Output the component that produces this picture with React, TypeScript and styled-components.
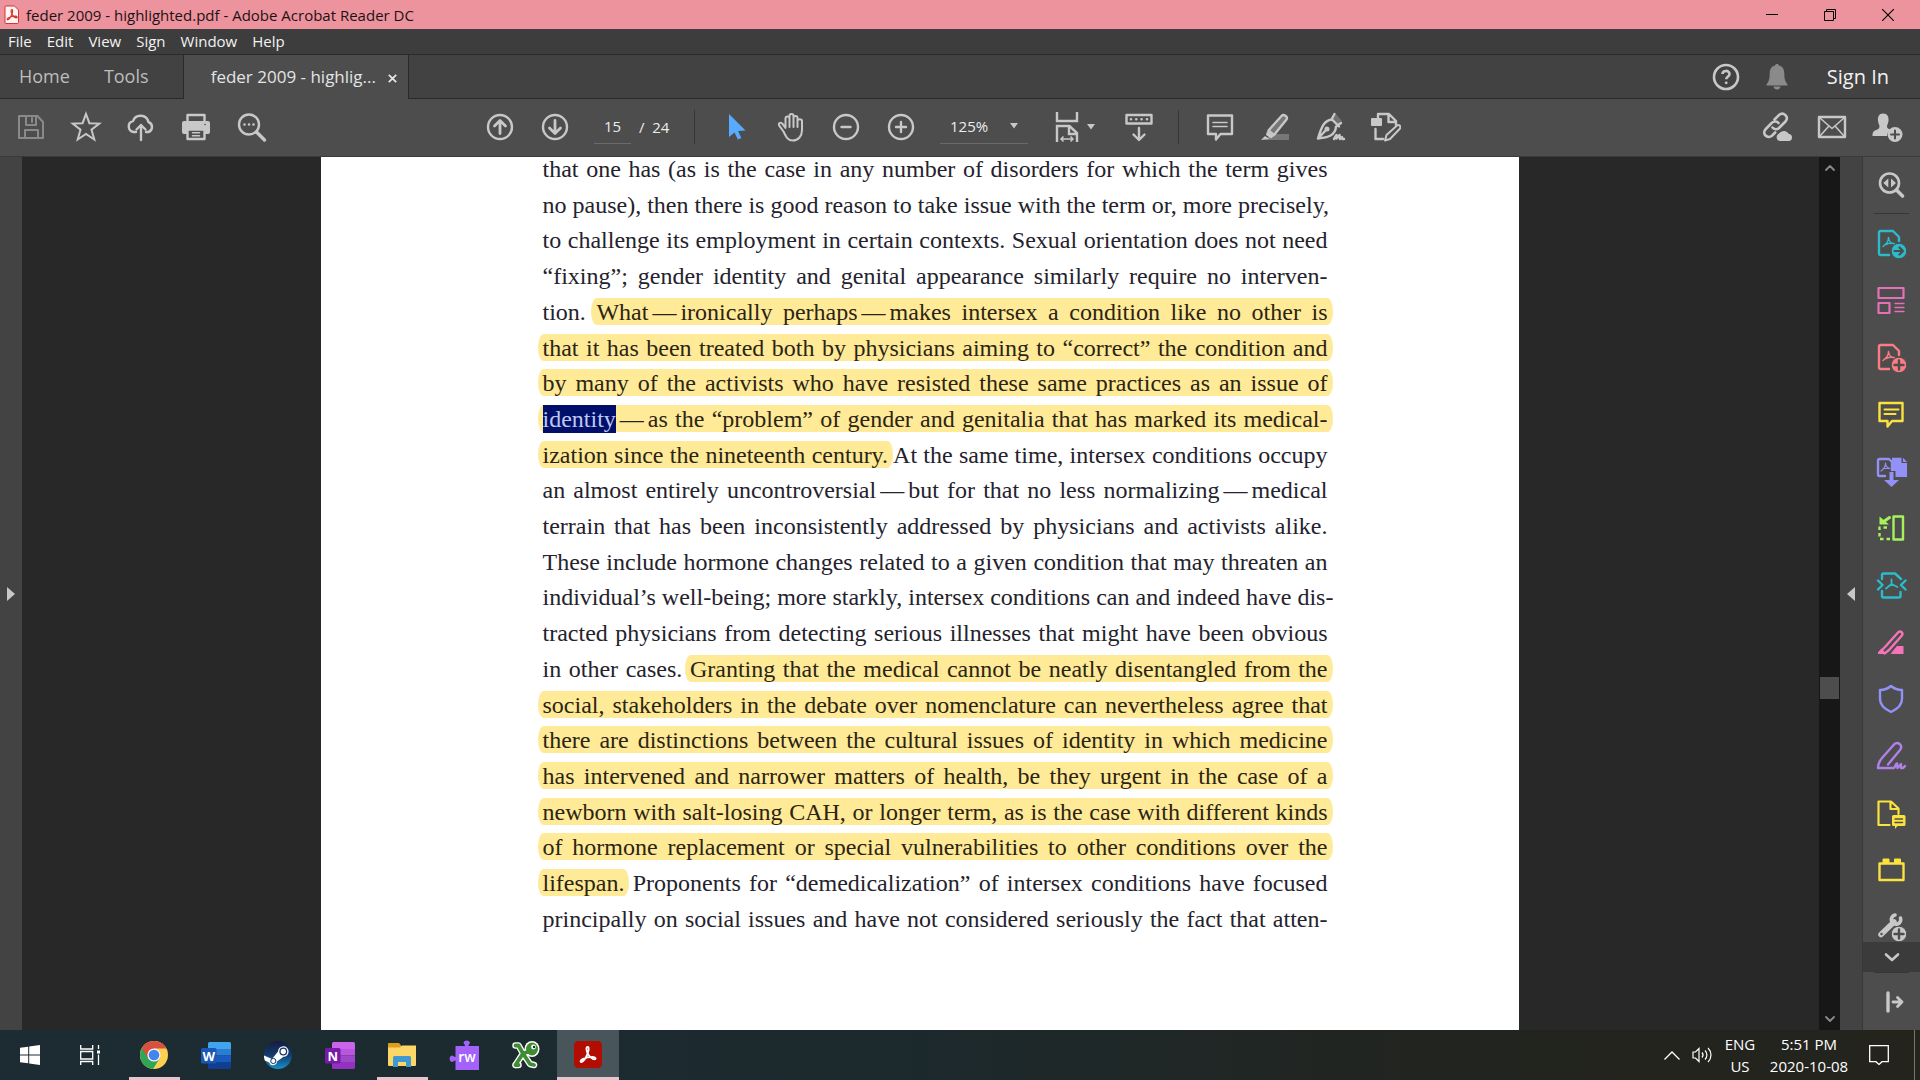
import React from "react";
import styled, { createGlobalStyle } from "styled-components";

const UI = `"Open Sans", "Noto Sans", "Liberation Sans", sans-serif`;
const BOOK = `"Liberation Serif", "DejaVu Serif", serif`;

const GlobalStyle = createGlobalStyle`
  * { box-sizing: border-box; }
  html, body { margin: 0; padding: 0; background: #282828; }
  body { font-family: ${UI}; overflow: hidden; }
  button { border: 0; padding: 0; background: none; color: inherit; font: inherit; }
`;

const Screen = styled.div`
  display: flex;
  flex-direction: column;
  height: 100vh;
  color: #e6e6e6;
`;

/* ---------- window chrome ---------- */

const TitleBar = styled.header`
  display: flex;
  align-items: center;
  flex: none;
  height: 29px;
  padding: 0 3px 0 4px;
  gap: 6px;
  background: #ed939d;
  color: #1c1214;
`;

const WindowTitle = styled.h1`
  flex: 1;
  margin: 0;
  font-size: 15px;
  font-weight: 400;
  white-space: nowrap;
`;

const CaptionButtons = styled.div`
  display: flex;
`;

const CaptionButton = styled.button`
  display: grid;
  place-items: center;
  width: 58px;
  height: 29px;
  color: #000;
`;

const MenuBar = styled.nav`
  display: flex;
  align-items: center;
  flex: none;
  height: 26px;
  padding: 0 8px 1px;
  gap: 15px;
  background: #3d3d3d;
  border-bottom: 1px solid #2a2a2a;
  color: #f2f2f2;
  font-size: 15px;
  line-height: 22px;
`;

const TabBar = styled.div`
  display: flex;
  align-items: stretch;
  flex: none;
  height: 44px;
  background: #424242;
  box-shadow: inset 0 -1px #2a2a2a;
`;

const MainTabs = styled.div`
  display: flex;
  align-items: center;
  gap: 34px;
  width: 183px;
  padding: 0 0 2px 19px;
  color: #bdbdbd;
  font-size: 18px;
`;

const DocumentTab = styled.div`
  display: flex;
  align-items: center;
  justify-content: flex-end;
  gap: 12px;
  width: 226px;
  padding: 0 11px 2px 0;
  background: #4d4d4d;
  border: solid #2a2a2a;
  border-width: 0 1px;
  color: #e4e4e4;
  font-size: 17px;
  white-space: nowrap;
`;

const AccountArea = styled.div`
  display: flex;
  align-items: center;
  gap: 19px;
  margin-left: auto;
  padding: 0 31px 1px 0;
`;

const SignIn = styled.button`
  margin-left: 15px;
  color: #f2f2f2;
  font-size: 20px;
  font-weight: 500;
`;

const IconButton = styled.button<{ $w?: number; $gap?: number; $dim?: boolean }>`
  display: flex;
  align-items: center;
  justify-content: center;
  flex: none;
  gap: ${(p) => p.$gap ?? 0}px;
  width: ${(p) => p.$w ?? 55}px;
  height: 32px;
  color: ${(p) => (p.$dim ? "#8a8a8a" : "#c8c8c8")};
`;

/* ---------- toolbar ---------- */

const Toolbar = styled.div`
  display: flex;
  align-items: center;
  flex: none;
  height: 58px;
  padding: 0 6px 2px 3px;
  background: #4d4d4d;
  border-bottom: 1px solid #3a3a3a;
`;

const ToolGroup = styled.div<{ $indent?: string }>`
  display: flex;
  align-items: center;
  margin-left: ${(p) => p.$indent ?? "0"};
`;

const Divider = styled.span`
  width: 1px;
  height: 34px;
  margin: 0 13px 0 12px;
  background: #363636;
`;

const PageField = styled.label`
  display: flex;
  align-items: center;
  gap: 8px;
  width: 88px;
  margin-left: 12px;
  color: #ececec;
  font-size: 15px;
  white-space: pre;
`;

const PageInput = styled.input`
  width: 37px;
  height: 35px;
  padding: 0;
  border: 0;
  border-bottom: 1px solid #6a6a6a;
  background: none;
  color: #ececec;
  font: 15px ${UI};
  text-align: center;
`;

const ZoomField = styled.label`
  display: grid;
  align-items: center;
  grid-template-columns: 1fr 18px;
  width: 88px;
  height: 35px;
  margin: 0 11px 0 12px;
  border-bottom: 1px solid #6a6a6a;
  color: #c8c8c8;
`;

const ZoomSelect = styled.select`
  appearance: none;
  width: 100%;
  padding: 0 0 0 10px;
  border: 0;
  background: none;
  color: #ececec;
  font: 15px ${UI};
`;

/* ---------- workspace ---------- */

const Workspace = styled.div`
  display: flex;
  flex: 1;
  min-height: 0;
`;

const PaneToggle = styled.button<{ $edge?: boolean }>`
  display: grid;
  place-items: center;
  flex: none;
  width: ${(p) => (p.$edge ? "23" : "22")}px;
  background: #434343;
  border-right: ${(p) => (p.$edge ? "1px solid #383838" : "0")};
  color: #c8c8c8;
`;

const Viewport = styled.main`
  display: flex;
  justify-content: center;
  flex: 1;
  min-width: 0;
  padding-right: 2px;
  overflow: hidden;
  background: #282828;
`;

const Page = styled.article`
  display: flex;
  width: 1198px;
  padding: 0 191px 99px 222px;
  background: #fff;
`;

const TextColumn = styled.div`
  display: flex;
  flex-direction: column;
  justify-content: space-between;
  flex: 1;
  min-width: 0;
  color: #24222c;
  font-family: ${BOOK};
  font-size: 24px;
  line-height: 24px;
`;

const Line = styled.p`
  margin: 0;
  text-align: justify;
  text-align-last: justify;
  white-space: nowrap;
`;

const Highlight = styled.mark`
  margin: 0 -5px;
  padding: 1px 5px 0;
  border-radius: 6px / 14px;
  background: #ffea98;
  color: #2c2412;
`;

const Selected = styled.span`
  padding: 1px 0;
  background: #00106a;
  color: #bfc8f2;
`;

const Dash = styled.span`
  margin: 0 4px;
`;

const ScrollBar = styled.div`
  display: flex;
  flex-direction: column;
  align-items: center;
  flex: none;
  width: 21px;
  background: #171717;
  color: #8a8a8a;
`;

const ScrollButton = styled.button`
  display: grid;
  place-items: center;
  width: 21px;
  height: 22px;
`;

const ScrollTrack = styled.div`
  display: flex;
  flex-direction: column;
  flex: 1;
  width: 19px;
`;

const ScrollSpace = styled.span<{ $grow: number }>`
  flex: ${(p) => p.$grow} 0 0;
`;

const ScrollThumb = styled.span`
  height: 22px;
  background: #4d4d4d;
`;

const ToolRail = styled.aside`
  display: flex;
  flex-direction: column;
  flex: none;
  width: 57px;
  background: #4d4d4d;
  color: #c8c8c8;
`;

const RailItem = styled.button<{ $tint?: string; $h?: number }>`
  display: grid;
  place-items: center;
  flex: none;
  width: 56px;
  height: ${(p) => p.$h ?? 57}px;
  color: ${(p) => p.$tint ?? "#c8c8c8"};
`;

const RailRule = styled.hr`
  flex: none;
  width: 35px;
  height: 1px;
  margin: 0 11px;
  border: 0;
  background: #363636;
`;

const RailList = styled.div`
  display: flex;
  flex-direction: column;
  flex: 1;
  min-height: 0;
  overflow: hidden;
`;

const RailMore = styled.button`
  display: grid;
  place-items: center;
  flex: none;
  height: 30px;
  background: #3b3b3b;
`;

/* ---------- task bar ---------- */

const TaskBar = styled.footer`
  display: flex;
  align-items: stretch;
  flex: none;
  height: 50px;
  background: linear-gradient(90deg, #1c2c32 0%, #1c2a2e 45%, #22241f 75%, #24241d 100%);
  color: #fff;
`;

const TaskButton = styled.button<{ $open?: boolean; $active?: boolean }>`
  display: grid;
  place-items: center;
  width: 62px;
  background: ${(p) =>
    p.$active
      ? "linear-gradient(#eac4cd, #eac4cd) bottom / 100% 3px no-repeat #48565b"
      : p.$open
        ? "linear-gradient(#eac4cd, #eac4cd) bottom / 51px 3px no-repeat"
        : "none"};
`;

const ShellButtons = styled.div`
  display: grid;
  grid-template-columns: 60px 60px;
  width: 123px;
`;

const ShellButton = styled.button`
  display: grid;
  place-items: center;
`;

const Tray = styled.div`
  display: flex;
  align-items: center;
  margin-left: auto;
  color: #fff;
  font-size: 15px;
  line-height: 22px;
  text-align: center;
`;

const TrayButton = styled.button<{ $w: number }>`
  display: grid;
  place-items: center;
  width: ${(p) => p.$w}px;
  height: 50px;
  line-height: 22px;
`;

const ShowDesktop = styled.button`
  width: 6px;
  height: 50px;
  margin-left: 12px;
  border-left: 1px solid #777770;
`;

/* ---------- drawings ---------- */

type SvgProps = { size?: number; sw?: number; children: React.ReactNode };

const Glyph = ({ size = 32, sw = 2.4, children }: SvgProps) => (
  <svg
    width={size}
    height={size}
    viewBox={`0 0 ${size} ${size}`}
    fill="none"
    stroke="currentColor"
    strokeWidth={sw}
    strokeLinecap="round"
    strokeLinejoin="round"
    aria-hidden="true"
  >
    {children}
  </svg>
);

const Fill = ({ d, color = "currentColor" }: { d: string; color?: string }) => (
  <path d={d} fill={color} stroke="none" />
);

const AcrobatMark = ({ scale = 1, x = 0, y = 0, sw = 1.6 }: { scale?: number; x?: number; y?: number; sw?: number }) => (
  <path
    transform={`translate(${x} ${y}) scale(${scale})`}
    strokeWidth={sw}
    d="M6.8 .8C5.2.8 5.6 4 7 6.6c1.200 2.300 3.800 4.500 5.400 4.500 1.700-.1 1.200-2-1.500-2.100-3 0-6 .7-8.300 1.900-2.200 1.200-2 2.700-1 2.500C3.400 13 5.600 9.400 6.800 6.200 7.900 3.400 8 .8 6.800.8Z"
  />
);

const PdfSheet = () => (
  <>
    <path d="M14 28H5.500A1.500 1.500 0 0 1 4 26.500V5.500A1.500 1.500 0 0 1 5.500 4H18l6 6v4" />
    <path d="M13.500 10.500c-.3 4-1 5.500-5.500 9M13.500 10.500c.6 4 1.500 5.500 6 6.500M11 17.500c2-1 5-1.500 8-1" strokeWidth="1.400" />
  </>
);

const Icons = {
  save: (
    <Glyph sw={2}>
      <path d="M4 5h18.500L28 11v16H4Z" />
      <path d="M11 5v9h10V5M10 27v-8h13v8M17 7v4" />
    </Glyph>
  ),
  star: (
    <Glyph sw={2}>
      <path d="m16 3 3.400 9.200 10 .4-7.900 6.100 2.800 9.800L16 23l-8.300 5.500 2.800-9.800-7.900-6.100 10-.4Z" strokeLinejoin="miter" />
    </Glyph>
  ),
  cloud: (
    <Glyph>
      <path d="M11 21H8.500A5.500 5.500 0 0 1 8 10.200 8 8 0 0 1 23.400 11 5.300 5.300 0 0 1 23.500 21H21M16 29V14M11.500 18.500 16 14l4.500 4.500" />
    </Glyph>
  ),
  print: (
    <Glyph>
      <path d="M7.500 10.500V4h17v6.500" />
      <Fill d="M4 10h24a2 2 0 0 1 2 2v9a2 2 0 0 1-2 2H4a2 2 0 0 1-2-2v-9a2 2 0 0 1 2-2Z" />
      <path d="M7.500 18.500h17V28h-17Z" fill="#4d4d4d" />
      <path d="M12.500 21.700h7M12.500 24.700h7" strokeWidth="1.600" />
      <circle cx="25" cy="13.500" r=".8" fill="#4d4d4d" stroke="none" />
    </Glyph>
  ),
  find: (
    <Glyph>
      <circle cx="14" cy="13.500" r="10" />
      <path d="m21.500 21 8 8" strokeWidth="3.400" />
      <path d="M9.500 13.500h.01M14 13.500h.01M18.500 13.500h.01" strokeWidth="2.600" />
    </Glyph>
  ),
  up: (
    <Glyph>
      <circle cx="16" cy="16" r="12" />
      <path d="M16 22.500V10M10.500 15 16 9.500l5.500 5.500" strokeWidth="2.800" />
    </Glyph>
  ),
  down: (
    <Glyph>
      <circle cx="16" cy="16" r="12" />
      <path d="M16 9.500V22M10.500 17l5.500 5.500 5.500-5.500" strokeWidth="2.800" />
    </Glyph>
  ),
  cursor: (
    <Glyph>
      <Fill color="#57acff" d="M9 3v23l5.500-4.600 3.400 7.200 3.400-1.600-3.200-7 7.400-.5Z" />
    </Glyph>
  ),
  hand: (
    <Glyph sw={2}>
      <path d="M8.500 20.500 4.600 15.200c-2.300-3 1.100-4.700 3-2.300L10.500 17V7.500c0-2.800 4-2.800 4 0V5c0-2.600 4-2.600 4 0v2c0-2.600 4-2.600 4 0v3c0-2.400 4.500-2.400 4.500 0v9c0 6-3.500 10.500-9.500 10.500-4.500 0-6.500-3.500-9-9ZM14.500 7.500V16M18.500 7v9M22.500 10v6" />
    </Glyph>
  ),
  minus: (
    <Glyph>
      <circle cx="16" cy="16" r="12" />
      <path d="M11.500 16h9" />
    </Glyph>
  ),
  plus: (
    <Glyph>
      <circle cx="16" cy="16" r="12" />
      <path d="M11 16h10M16 11v10" />
    </Glyph>
  ),
  fit: (
    <svg width="24" height="32" viewBox="0 0 24 32" fill="none" stroke="currentColor" strokeWidth="2.400" aria-hidden="true">
      <path d="M2 1v9h20V1M2 31V15h12.500l7.500 7v9M14 15v8h8" />
      <path d="M6 28h12M8.500 25.500 6 28l2.500 2.500M15.500 25.500 18 28l-2.500 2.500" strokeWidth="1.500" />
    </svg>
  ),
  keyboard: (
    <Glyph>
      <path d="M3.500 4h25v8.500h-25ZM16 17v11M10.500 23.500 16 29l5.500-5.500" />
      <path d="M8 8.300h.01M13.300 8.300h.01M18.600 8.300h.01M24 8.300h.01" strokeWidth="2.600" />
    </Glyph>
  ),
  comment: (
    <Glyph>
      <path d="M4 4.500h24V23H16.500L12 28.500V23H4Z" />
      <path d="M9 11.500h14M9 15.500h14" strokeWidth="1.600" />
    </Glyph>
  ),
  marker: (
    <Glyph>
      <path d="M12 23h18v6H6Z" fill="#777" stroke="none" />
      <path d="M9.500 19.500 22.500 5c2-2.200 7 .5 5 3.500L15 24Z" fill="#777" />
      <Fill d="m8 20 7 5-3 2.500-5-3.500ZM6 25l4.500 3L2 29Z" />
    </Glyph>
  ),
  pen: (
    <Glyph>
      <path d="m17 7 5-4 6 7-4.500 4Z" fill="#707070" stroke="none" />
      <path d="m17.500 8 7.500 7.500M20.500 3l-3 5.500C11 9.500 8 14 4 27.500c10-1 17.500-3 18-12l5-3.500M4 27.500l8-8.500" />
      <circle cx="13" cy="18" r="1.300" />
      <path d="m20 28 2.500-4v3.500l3-3.500.5 4 2-2 .5 2h1.500" />
    </Glyph>
  ),
  edit: (
    <Glyph>
      <path d="M9 7V3h11l7 7v4M19.500 3v8H27M6.500 18v10H14" />
      <Fill d="M3 7h9a1 1 0 0 1 1 1v6a1 1 0 0 1-1 1H3a1 1 0 0 1-1-1V8a1 1 0 0 1 1-1Z" />
      <path d="M16 29.500 17.500 24 28 14.500c2-1.500 4.500 1 3 3L21 28Z" strokeWidth="2" />
    </Glyph>
  ),
  link: (
    <Glyph sw={2.6}>
      <path d="m13.500 8.500 4.200-4.200c4.500-4.300 10.700 1.200 6.800 6.200L18 17c-2 1.800-5 1.500-6.500-.5M17.500 12c-1.500-1.800-4.500-2.200-6.500-.4L4.800 18c-4.500 4.500 1.600 10.700 6.400 6.500l3-3" />
      <Fill d="M18.500 30a4 4 0 0 1-.5-7.500A6 6 0 0 1 28 23a3.600 3.600 0 0 1 .5 7Z" />
    </Glyph>
  ),
  mail: (
    <Glyph sw={2}>
      <path d="M3 6h26v20H3Z" strokeWidth="2.400" />
      <path d="m4 7 12 10.500L28 7M4 25l8.500-9.500M28 25l-8.500-9.500" strokeWidth="1.600" />
    </Glyph>
  ),
  person: (
    <Glyph>
      <Fill d="M12 2.500c4.500 0 6 3.500 5.500 7.500-.3 2.500-1.500 4-1.500 5.500 0 2 2 2.500 3.500 3.200-2.500 1.800-3.500 3.500-3.500 6.300H1.500c0-4 1-5 3.500-6 2-.8 3.500-1.500 3.500-3.500 0-1.500-1.200-3-1.500-5.500-.5-4 1-7.500 5-7.500Z" />
      <circle cx="24" cy="23.500" r="7.500" fill="currentColor" stroke="none" />
      <path d="M20 23.500h8M24 19.500v8" stroke="#4d4d4d" strokeWidth="2" />
    </Glyph>
  ),
  help: (
    <Glyph>
      <circle cx="16" cy="16" r="12" strokeWidth="2.600" />
      <path d="M12.500 13c0-4 7-4.200 7 0 0 2.800-3.300 2.600-3.300 5.300" strokeWidth="2.600" strokeLinecap="butt" />
      <path d="M16.200 21.800h.01" strokeWidth="2.800" />
    </Glyph>
  ),
  bell: (
    <Glyph>
      <Fill d="M14 4.500c.5-2 3.500-2 4 0 4 1 5.300 4 5.300 8 0 6 1.200 8.500 3.200 11v1h-21v-1c2-2.500 3.200-5 3.200-11 0-4 1.300-7 5.300-8ZM12.500 25.500h7c-.5 4-6.500 4-7 0Z" />
    </Glyph>
  ),
  railFind: (
    <Glyph>
      <circle cx="14.500" cy="14" r="9.500" strokeWidth="2.600" />
      <path d="m21.500 21 6 6" strokeWidth="3.600" />
      <Fill d="m13.300 9.500-5 4.500 5 4.500ZM16 9.500l5 4.500-5 4.500Z" />
    </Glyph>
  ),
  railExport: (
    <Glyph>
      <PdfSheet />
      <circle cx="24" cy="24" r="7.800" fill="currentColor" stroke="#4d4d4d" strokeWidth="1" />
      <path d="M19.500 24h8M24.500 20.500 28 24l-3.500 3.500" stroke="#4d4d4d" strokeWidth="2.200" />
    </Glyph>
  ),
  railOrganize: (
    <Glyph sw={2.2}>
      <path d="M3.500 4h25v10h-25ZM3.500 19h11v10h-11Z" />
      <path d="M20 19.500h9M20 23.500h9M20 27.500h9" strokeWidth="1.300" />
    </Glyph>
  ),
  railCreate: (
    <Glyph>
      <PdfSheet />
      <circle cx="24" cy="24" r="7.800" fill="currentColor" stroke="#4d4d4d" strokeWidth="1" />
      <path d="M19.500 24h9M24 19.500v9" stroke="#4d4d4d" strokeWidth="2.400" />
    </Glyph>
  ),
  railComment: (
    <Glyph>
      <path d="M4.500 5h23v18H17l-4.500 5.500V23h-8Z" />
      <path d="M9.500 11.500h14M9.500 16h11" strokeWidth="2" />
    </Glyph>
  ),
  railCombine: (
    <Glyph>
      <path d="M10 21H4.500A1.500 1.500 0 0 1 3 19.500v-14A1.500 1.500 0 0 1 4.500 4H14l3 3v8" />
      <path d="M10.500 8c0 4-1.500 6-4.500 8M10.500 8c0 3 2 5 4.500 5.500M8 13.500h6" strokeWidth="1.200" />
      <Fill d="M17 2.800h9.500V8H32v14H20.500V16H17Z" />
      <Fill d="M28 2.800 32 7h-4ZM14.500 17h4v8h5.500L16.500 32 9 25h5.500Z" />
    </Glyph>
  ),
  railRotate: (
    <Glyph>
      <path d="M18.500 4.500H28v23h-9.500Z" />
      <path d="M15 27H4.500V15.500H15" strokeDasharray="3.500 3" strokeLinecap="butt" />
      <path d="M14.500 5.500 8 10" strokeWidth="3" />
      <Fill d="M4.500 4.500 14 12.500H4.500Z" />
    </Glyph>
  ),
  railCompress: (
    <Glyph>
      <path d="M7 10V6A1.500 1.500 0 0 1 8.500 4.500H20L26 10M7 22v5a1.500 1.500 0 0 0 1.500 1.500H24A1.500 1.500 0 0 0 25.500 27v-4M3 11.500 7.500 16 3 20.500M30.500 11.500 26 16l4.500 4.500" />
      <path d="M16.500 10.500v4.500L11 19.500M16.500 15l6 3" strokeWidth="1.800" />
    </Glyph>
  ),
  railHighlight: (
    <Glyph>
      <path d="m10 21 13-14.500c2.500-2.500 6 .5 3.500 3.500L14 24l-4.500 3.500-3-3Z" />
      <Fill d="M16.500 26.500 22 20h6.500v8H16ZM3 26l3.500-3.500L11 28H3Z" />
    </Glyph>
  ),
  railShield: (
    <Glyph>
      <path d="M16 3c3.500 3 7 4 11 4v9c0 6-4.500 10-11 13C9.500 26 5 22 5 16V7c4 0 7.500-1 11-4Z" />
    </Glyph>
  ),
  railSign: (
    <Glyph>
      <path d="M3 28c0-4 1.500-7 4-10L19 4.500c4-3.500 9.500 1 6 5.500L13 24.500M3 28h16c1-1 1.500-4 3-4.500l.5 4.500 3.500-4v4c1.500.5 3-.5 4-2" />
    </Glyph>
  ),
  railReview: (
    <Glyph>
      <path d="M14.500 28h-11V4.500H16l7.500 7V17M15.500 4.500V12h8" strokeWidth="2.200" />
      <Fill d="M18.500 18H29a1.500 1.500 0 0 1 1.500 1.500v8A1.500 1.500 0 0 1 29 29h-6.500L20 32v-3h-1.500a1.500 1.500 0 0 1-1.500-1.500v-8a1.500 1.500 0 0 1 1.500-1.500Z" />
      <path d="M20 22h7.500M20 25.500h7.500" stroke="#4d4d4d" strokeWidth="1.400" />
    </Glyph>
  ),
  railMedia: (
    <Glyph>
      <path d="M4.500 9.500h24V26h-24Z" strokeWidth="2.400" />
      <Fill d="M7.500 5.500q0-1 1-1h5q1 0 1 1v4h-7ZM19 5.500q0-1 1-1h5q1 0 1 1v4h-7Z" />
    </Glyph>
  ),
  railTools: (
    <Glyph>
      <path d="M6 23.500 19 11" strokeWidth="5.500" />
      <path d="M25.500 7A4.700 4.700 0 1 1 20 4" strokeWidth="3.600" />
      <circle cx="6.500" cy="23" r="1.200" fill="#4d4d4d" stroke="none" />
      <circle cx="24" cy="23" r="7.800" fill="currentColor" stroke="#4d4d4d" strokeWidth="1" />
      <path d="M19.500 23h9M24 18.500v9" stroke="#4d4d4d" strokeWidth="2.400" />
    </Glyph>
  ),
  chevron: (
    <Glyph size={20} sw={2.6}>
      <path d="m4 7.500 6 5.500 6-5.500" />
    </Glyph>
  ),
  railExit: (
    <Glyph>
      <path d="M13 7v18" strokeWidth="3.400" />
      <path d="M18 16h9M22.500 11.500 27 16l-4.500 4.500" strokeWidth="2.800" />
    </Glyph>
  ),
};

const Caret = () => (
  <svg width="8" height="6" viewBox="0 0 8 6" aria-hidden="true">
    <path d="M0 0h8L4 5.500Z" fill="currentColor" />
  </svg>
);

const Arrow = ({ left }: { left?: boolean }) => (
  <svg width="8" height="14" viewBox="0 0 8 14" aria-hidden="true">
    <path d={left ? "M8 0v14L0 7Z" : "M0 0v14l8-7Z"} fill="currentColor" />
  </svg>
);

const ScrollArrow = ({ down }: { down?: boolean }) => (
  <Glyph size={12} sw={1.8}>
    <path d={down ? "M2 4l4 4 4-4" : "M2 8l4-4 4 4"} />
  </Glyph>
);

const FileMark = () => (
  <svg width="16" height="20" viewBox="0 0 16 20" fill="#fff5f4" stroke="#d9342b" aria-hidden="true">
    <path d="M2 1h8.500L14.500 5v12.500a1 1 0 0 1-1 1H2a1 1 0 0 1-1-1V2a1 1 0 0 1 1-1Z" />
    <g fill="none">
      <AcrobatMark x={2.5} y={4} scale={0.8} sw={1.5} />
    </g>
  </svg>
);

const WindowsLogo = () => (
  <svg width="20" height="20" viewBox="0 0 20 20" fill="#fff" aria-hidden="true">
    <path d="M0 2.800 8.200 1.700v7.800H0ZM9.200 1.600 20 0v9.500H9.200ZM0 10.500h8.200v7.800L0 17.200ZM9.200 10.500H20V20L9.200 18.400Z" />
  </svg>
);

const TaskView = () => (
  <svg width="20" height="20" viewBox="0 0 20 20" fill="none" stroke="#fff" strokeWidth="1.300" aria-hidden="true">
    <path d="M.7 0v4h12V0M.7 6.500h12v7.500H.7ZM.7 20v-3.500h12V20M18.500 0v4M18.500 9.500V20" />
    <path d="M17 5.500h3v3h-3Z" fill="#fff" stroke="none" />
  </svg>
);

const ChromeLogo = () => (
  <svg width="28" height="28" viewBox="0 0 28 28" aria-hidden="true">
    <circle cx="14" cy="14" r="14" fill="#fdd050" />
    <path d="M14 14 1.900 7A14 14 0 0 0 13 28l7-11Z" fill="#2da658" />
    <path d="M14 14 8 17.500 1.900 7A14 14 0 0 1 26.300 7.500H14Z" fill="#d9503f" />
    <circle cx="14" cy="14" r="6.600" fill="#f3f3f3" />
    <circle cx="14" cy="14" r="5.300" fill="#4484ec" />
  </svg>
);

const OfficeLogo = ({ letter, tones }: { letter: string; tones: [string, string, string, string, string] }) => (
  <svg width="30" height="27" viewBox="0 0 30 27" aria-hidden="true">
    <path d="M8.500 0h20A1.500 1.500 0 0 1 30 1.500V7H7V1.500A1.500 1.500 0 0 1 8.500 0Z" fill={tones[0]} />
    <path d="M7 7h23v6.500H7Z" fill={tones[1]} />
    <path d="M7 13.500h23V20H7Z" fill={tones[2]} />
    <path d="M7 20h23v5.500a1.500 1.500 0 0 1-1.500 1.500h-20A1.500 1.500 0 0 1 7 25.500Z" fill={tones[3]} />
    <rect y="6" width="15.500" height="15.500" rx="1.500" fill={tones[4]} />
    <text x="7.700" y="18.500" fill="#fff" fontFamily={UI} fontSize="13" fontWeight="700" textAnchor="middle">
      {letter}
    </text>
  </svg>
);

const SteamLogo = () => (
  <svg width="28" height="28" viewBox="0 0 28 28" aria-hidden="true">
    <defs>
      <linearGradient id="steam" x1="0" y1="0" x2="0" y2="1">
        <stop offset="0" stopColor="#171b3c" />
        <stop offset=".5" stopColor="#133b70" />
        <stop offset="1" stopColor="#1890c8" />
      </linearGradient>
    </defs>
    <circle cx="14" cy="14" r="14" fill="url(#steam)" />
    <path d="M0 14.500 8 18l6-7.500a5.300 5.300 0 1 1 5.500 5.300L13 20.500a4 4 0 0 1-7.800 1L.8 19.500A14 14 0 0 1 0 14.500Z" fill="#fff" />
    <circle cx="19.300" cy="10.500" r="3.300" fill="none" stroke="#173566" strokeWidth="1.300" />
    <circle cx="9.300" cy="20" r="2.600" fill="none" stroke="#173566" strokeWidth="1" />
  </svg>
);

const FolderLogo = () => (
  <svg width="28" height="24" viewBox="0 0 28 24" aria-hidden="true">
    <path d="M1 0h10l2.500 3H27a1 1 0 0 1 1 1v4H0V1a1 1 0 0 1 1-1Z" fill="#dc9f1d" />
    <path d="M0 4.500h12L14 2.500h14V22a1 1 0 0 1-1 1H1a1 1 0 0 1-1-1Z" fill="#fcd667" />
    <path d="M5 24V14.500A1.500 1.500 0 0 1 6.500 13h15a1.500 1.500 0 0 1 1.500 1.500V24h-5v-5h-8v5Z" fill="#3f98cf" />
  </svg>
);

const PuzzleLogo = () => (
  <svg width="30" height="30" viewBox="0 0 30 30" aria-hidden="true">
    <path d="M6.500 6H16c0-2-1.500-2-1.500-3.500a3.500 3 0 0 1 6.500 0C21 4 19.500 4 19.500 6H30v24H6.500v-9.500c-2 0-2 1.500-3.500 1.500a3 3.300 0 0 1 0-6.500c1.500 0 1.500 1.500 3.500 1.500Z" fill="#a262fb" />
    <text x="18" y="22" fill="#fff" fontFamily={UI} fontSize="14" fontWeight="600" textAnchor="middle">
      rw
    </text>
  </svg>
);

const FrogLogo = () => (
  <svg width="28" height="28" viewBox="0 0 28 28" fill="none" strokeLinecap="round" strokeLinejoin="round" aria-hidden="true">
    <path d="M3.500 4.500h3l4.500 8 6-2M11 12.500 3.500 24M11 12.500 18 23l4 1M3.500 24h3" stroke="#fff" strokeWidth="6.500" />
    <ellipse cx="20" cy="8" rx="7.500" ry="8" fill="#fff" />
    <path d="M3.500 4.500h3l4.500 8 6-2M11 12.500 3.500 24M11 12.500 18 23l4 1M3.500 24h3" stroke="#3f8c34" strokeWidth="3.800" />
    <ellipse cx="20" cy="8" rx="6" ry="6.500" fill="#3f8c34" />
    <circle cx="21.500" cy="6" r="2.400" fill="#fff" />
    <circle cx="22" cy="6" r="1.200" fill="#1c2c20" />
  </svg>
);

const AcrobatLogo = () => (
  <svg width="28" height="28" viewBox="0 0 28 28" aria-hidden="true">
    <rect width="28" height="27" rx="4.500" fill="#b30c00" />
    <g fill="none" stroke="#fff">
      <AcrobatMark x={5.5} y={5} scale={1.2} sw={1.5} />
    </g>
  </svg>
);

/* ---------- content ---------- */

const withDashes = (text: string) =>
  text.split("—").map((part, i) => (
    <React.Fragment key={i}>
      {i > 0 && <Dash>—</Dash>}
      {part}
    </React.Fragment>
  ));

type Segment = string | { mark: string; selected?: string };

const lines: Segment[][] = [
  ["that one has (as is the case in any number of disorders for which the term gives"],
  ["no pause), then there is good reason to take issue with the term or, more precisely,"],
  ["to challenge its employment in certain contexts. Sexual orientation does not need"],
  ["“fixing”; gender identity and genital appearance similarly require no interven-"],
  ["tion. ", { mark: "What—ironically perhaps—makes intersex a condition like no other is" }],
  [{ mark: "that it has been treated both by physicians aiming to “correct” the condition and" }],
  [{ mark: "by many of the activists who have resisted these same practices as an issue of" }],
  [{ selected: "identity", mark: "—as the “problem” of gender and genitalia that has marked its medical-" }],
  [{ mark: "ization since the nineteenth century." }, " At the same time, intersex conditions occupy"],
  ["an almost entirely uncontroversial—but for that no less normalizing—medical"],
  ["terrain that has been inconsistently addressed by physicians and activists alike."],
  ["These include hormone changes related to a given condition that may threaten an"],
  ["individual’s well-being; more starkly, intersex conditions can and indeed have dis-"],
  ["tracted physicians from detecting serious illnesses that might have been obvious"],
  ["in other cases. ", { mark: "Granting that the medical cannot be neatly disentangled from the" }],
  [{ mark: "social, stakeholders in the debate over nomenclature can nevertheless agree that" }],
  [{ mark: "there are distinctions between the cultural issues of identity in which medicine" }],
  [{ mark: "has intervened and narrower matters of health, be they urgent in the case of a" }],
  [{ mark: "newborn with salt-losing CAH, or longer term, as is the case with different kinds" }],
  [{ mark: "of hormone replacement or special vulnerabilities to other conditions over the" }],
  [{ mark: "lifespan." }, " Proponents for “demedicalization” of intersex conditions have focused"],
  ["principally on social issues and have not considered seriously the fact that atten-"],
];

const railTools: [string, React.ReactNode, string?][] = [
  ["Export PDF", Icons.railExport, "#2bbccb"],
  ["Organize Pages", Icons.railOrganize, "#e66fb9"],
  ["Create PDF", Icons.railCreate, "#fb7c83"],
  ["Comment", Icons.railComment, "#fbe23f"],
  ["Combine Files", Icons.railCombine, "#9391f7"],
  ["Compare Files", Icons.railRotate, "#a5f25d"],
  ["Compress PDF", Icons.railCompress, "#2bbccb"],
  ["Redact", Icons.railHighlight, "#f573b7"],
  ["Protect", Icons.railShield, "#9391f7"],
  ["Fill & Sign", Icons.railSign, "#b180ea"],
  ["Send for Comments", Icons.railReview, "#fbe23f"],
  ["Rich Media", Icons.railMedia, "#fbe23f"],
  ["More Tools", Icons.railTools],
];

export default function App() {
  return (
    <Screen>
      <GlobalStyle />
      <TitleBar>
        <FileMark />
        <WindowTitle>feder 2009 - highlighted.pdf - Adobe Acrobat Reader DC</WindowTitle>
        <CaptionButtons>
          <CaptionButton aria-label="Minimize">
            <svg width="12" height="12" viewBox="0 0 12 12" stroke="currentColor"><path d="M0 5.500h12" /></svg>
          </CaptionButton>
          <CaptionButton aria-label="Restore">
            <svg width="12" height="12" viewBox="0 0 12 12" fill="none" stroke="currentColor"><path d="M.5 2.500h9v9h-9ZM2.500 2.500v-2h9v9h-2" /></svg>
          </CaptionButton>
          <CaptionButton aria-label="Close">
            <svg width="12" height="12" viewBox="0 0 12 12" stroke="currentColor" strokeWidth="1.200"><path d="M0 0l12 12M12 0 0 12" /></svg>
          </CaptionButton>
        </CaptionButtons>
      </TitleBar>

      <MenuBar>
        {["File", "Edit", "View", "Sign", "Window", "Help"].map((name) => (
          <button key={name}>{name}</button>
        ))}
      </MenuBar>

      <TabBar>
        <MainTabs>
          <button>Home</button>
          <button>Tools</button>
        </MainTabs>
        <DocumentTab>
          <span>feder 2009 - highlig...</span>
          <button aria-label="Close tab">
            <svg width="9" height="9" viewBox="0 0 9 9" stroke="currentColor" strokeWidth="1.800"><path d="m.8.8 7.400 7.400M8.200.8.800 8.200" /></svg>
          </button>
        </DocumentTab>
        <AccountArea>
          <IconButton $w={32} aria-label="Help">{Icons.help}</IconButton>
          <IconButton $w={32} $dim aria-label="Notifications">{Icons.bell}</IconButton>
          <SignIn>Sign In</SignIn>
        </AccountArea>
      </TabBar>

      <Toolbar>
        <ToolGroup>
          <IconButton $dim aria-label="Save">{Icons.save}</IconButton>
          <IconButton aria-label="Star">{Icons.star}</IconButton>
          <IconButton aria-label="Upload">{Icons.cloud}</IconButton>
          <IconButton aria-label="Print">{Icons.print}</IconButton>
          <IconButton aria-label="Find">{Icons.find}</IconButton>
        </ToolGroup>
        <ToolGroup $indent="194px">
          <IconButton aria-label="Previous page">{Icons.up}</IconButton>
          <IconButton aria-label="Next page">{Icons.down}</IconButton>
          <PageField>
            <PageInput aria-label="Page number" defaultValue="15" />
            <span>/  24</span>
          </PageField>
          <Divider />
          <IconButton aria-label="Select">{Icons.cursor}</IconButton>
          <IconButton aria-label="Pan">{Icons.hand}</IconButton>
          <IconButton aria-label="Zoom out">{Icons.minus}</IconButton>
          <IconButton aria-label="Zoom in">{Icons.plus}</IconButton>
          <ZoomField>
            <ZoomSelect aria-label="Zoom level" defaultValue="125%">
              <option>125%</option>
            </ZoomSelect>
            <Caret />
          </ZoomField>
          <IconButton $w={72} $gap={8} aria-label="Page fit">
            {Icons.fit}
            <Caret />
          </IconButton>
          <IconButton aria-label="Scrolling">{Icons.keyboard}</IconButton>
          <Divider />
          <IconButton aria-label="Add comment">{Icons.comment}</IconButton>
          <IconButton aria-label="Highlight text">{Icons.marker}</IconButton>
          <IconButton aria-label="Sign document">{Icons.pen}</IconButton>
          <IconButton aria-label="Edit PDF">{Icons.edit}</IconButton>
        </ToolGroup>
        <ToolGroup $indent="auto">
          <IconButton aria-label="Share link">{Icons.link}</IconButton>
          <IconButton aria-label="Send by email">{Icons.mail}</IconButton>
          <IconButton aria-label="Share with others">{Icons.person}</IconButton>
        </ToolGroup>
      </Toolbar>

      <Workspace>
        <PaneToggle aria-label="Show navigation pane"><Arrow /></PaneToggle>
        <Viewport>
          <Page>
            <TextColumn>
              {lines.map((segments, row) => (
                <Line key={row}>
                  {segments.map((segment, i) =>
                    typeof segment === "string" ? (
                      <React.Fragment key={i}>{withDashes(segment)}</React.Fragment>
                    ) : (
                      <Highlight key={i}>
                        {segment.selected && <Selected>{segment.selected}</Selected>}
                        {withDashes(segment.mark)}
                      </Highlight>
                    ),
                  )}
                </Line>
              ))}
            </TextColumn>
          </Page>
        </Viewport>
        <ScrollBar>
          <ScrollButton aria-label="Scroll up"><ScrollArrow /></ScrollButton>
          <ScrollTrack>
            <ScrollSpace $grow={498} />
            <ScrollThumb />
            <ScrollSpace $grow={309} />
          </ScrollTrack>
          <ScrollButton aria-label="Scroll down"><ScrollArrow down /></ScrollButton>
        </ScrollBar>
        <PaneToggle $edge aria-label="Hide tools pane"><Arrow left /></PaneToggle>
        <ToolRail>
          <RailItem $h={56} aria-label="Find tools">{Icons.railFind}</RailItem>
          <RailRule />
          <RailList>
            {railTools.map(([name, icon, tint]) => (
              <RailItem key={name} $tint={tint} aria-label={name}>
                {icon}
              </RailItem>
            ))}
          </RailList>
          <RailMore aria-label="More">{Icons.chevron}</RailMore>
          <RailRule />
          <RailItem aria-label="Open tools pane">{Icons.railExit}</RailItem>
        </ToolRail>
      </Workspace>

      <TaskBar>
        <ShellButtons>
          <ShellButton aria-label="Start"><WindowsLogo /></ShellButton>
          <ShellButton aria-label="Task view"><TaskView /></ShellButton>
        </ShellButtons>
        <TaskButton $open aria-label="Chrome"><ChromeLogo /></TaskButton>
        <TaskButton aria-label="Word">
          <OfficeLogo letter="W" tones={["#41a5ee", "#2b7cd3", "#185abd", "#103f91", "#1a56b4"]} />
        </TaskButton>
        <TaskButton aria-label="Steam"><SteamLogo /></TaskButton>
        <TaskButton aria-label="OneNote">
          <OfficeLogo letter="N" tones={["#ca64ea", "#b956dd", "#9f47c9", "#9332bf", "#7719aa"]} />
        </TaskButton>
        <TaskButton $open aria-label="File Explorer"><FolderLogo /></TaskButton>
        <TaskButton aria-label="Read and write"><PuzzleLogo /></TaskButton>
        <TaskButton aria-label="Frog"><FrogLogo /></TaskButton>
        <TaskButton $active aria-label="Acrobat Reader"><AcrobatLogo /></TaskButton>
        <Tray>
          <TrayButton $w={28} aria-label="Hidden icons">
            <svg width="16" height="9" viewBox="0 0 16 9" fill="none" stroke="#fff" strokeWidth="1.300"><path d="m.5 8.500 7.500-7.500 7.500 7.500" /></svg>
          </TrayButton>
          <TrayButton $w={32} aria-label="Volume">
            <svg width="21" height="18" viewBox="0 0 21 18" fill="none" stroke="#fff" strokeWidth="1.200">
              <path d="M1 6h2.500L7 2.500v13L3.500 12H1ZM10 6.500c1.300 1.500 1.300 3.500 0 5M13 4.500c2.500 2.500 2.500 6.500 0 9M16 2c4 4 4 10 0 14" />
            </svg>
          </TrayButton>
          <TrayButton $w={44}>
            <span>ENG<br />US</span>
          </TrayButton>
          <TrayButton $w={94}>
            <span>5:51 PM<br />2020-10-08</span>
          </TrayButton>
          <TrayButton $w={46} aria-label="Notifications center">
            <svg width="20" height="20" viewBox="0 0 20 20" fill="none" stroke="#fff" strokeWidth="1.300"><path d="M.7.7h18.600v16H13L10 19.500 7 16.700H.7Z" /></svg>
          </TrayButton>
          <ShowDesktop aria-label="Show desktop" />
        </Tray>
      </TaskBar>
    </Screen>
  );
}
